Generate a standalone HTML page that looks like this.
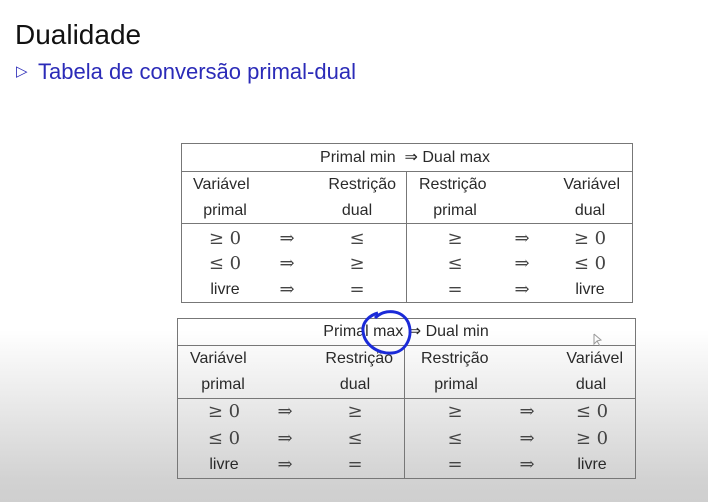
<!DOCTYPE html>
<html><head><meta charset="utf-8"><style>
html,body{margin:0;padding:0}
body{width:708px;height:502px;position:relative;overflow:hidden;font-family:"Liberation Sans",sans-serif;color:#2a2a2a;
background:linear-gradient(to bottom,#fff 0px,#fff 330px,#e4e4e4 420px,#d2d2d2 480px,#cfcfcf 502px);}
.t{position:absolute;font-size:16px;line-height:20px;white-space:nowrap}
.c{transform:translateX(-50%)}
.r{transform:translateX(-100%)}
.m{font-family:"DejaVu Serif","Liberation Serif",serif;font-size:18px;color:#444}
.box{position:absolute;border:1.5px solid #777;box-sizing:border-box}
.hl{position:absolute;height:0;border-top:1.3px solid #777}
.vl{position:absolute;width:0;border-left:1.3px solid #777}
</style></head><body>
<div class="t" style="left:15px;top:19px;font-size:28px;line-height:32px;color:#111">Dualidade</div>
<div class="t" style="left:16px;top:62px;font-size:15px;line-height:20px;color:#2b2bb8">&#9655;</div>
<div class="t" style="left:38px;top:59px;font-size:22px;line-height:26px;color:#2b2bb8">Tabela de conversão primal-dual</div>

<!-- table 1 -->
<div class="box" style="left:181px;top:143px;width:452px;height:160px"></div>
<div class="hl" style="left:181px;top:171px;width:452px"></div>
<div class="hl" style="left:181px;top:223px;width:452px"></div>
<div class="vl" style="left:406px;top:171px;height:132px"></div>
<div class="t c" style="left:405px;top:148px">Primal min &nbsp;⇒ Dual max</div>
<div class="t" style="left:193px;top:175px">Variável</div>
<div class="t c" style="left:225px;top:201px">primal</div>
<div class="t r" style="left:396px;top:175px">Restrição</div>
<div class="t c" style="left:357px;top:201px">dual</div>
<div class="t" style="left:419px;top:175px">Restrição</div>
<div class="t c" style="left:455px;top:201px">primal</div>
<div class="t r" style="left:620px;top:175px">Variável</div>
<div class="t c" style="left:590px;top:201px">dual</div>
<div class="t c m" style="left:225px;top:229px">≥ 0</div><div class="t c m" style="left:287px;top:229px">⇒</div><div class="t c m" style="left:357px;top:229px">≤</div>
<div class="t c m" style="left:455px;top:229px">≥</div><div class="t c m" style="left:522px;top:229px">⇒</div><div class="t c m" style="left:590px;top:229px">≥ 0</div>
<div class="t c m" style="left:225px;top:254px">≤ 0</div><div class="t c m" style="left:287px;top:254px">⇒</div><div class="t c m" style="left:357px;top:254px">≥</div>
<div class="t c m" style="left:455px;top:254px">≤</div><div class="t c m" style="left:522px;top:254px">⇒</div><div class="t c m" style="left:590px;top:254px">≤ 0</div>
<div class="t c" style="left:225px;top:280px">livre</div><div class="t c m" style="left:287px;top:280px">⇒</div><div class="t c m" style="left:357px;top:280px">=</div>
<div class="t c m" style="left:455px;top:280px">=</div><div class="t c m" style="left:522px;top:280px">⇒</div><div class="t c" style="left:590px;top:280px">livre</div>

<!-- table 2 -->
<div class="box" style="left:177px;top:318px;width:459px;height:161px"></div>
<div class="hl" style="left:177px;top:345px;width:459px"></div>
<div class="hl" style="left:177px;top:398px;width:459px"></div>
<div class="vl" style="left:404px;top:345px;height:134px"></div>
<div class="t c" style="left:406px;top:322px">Primal max ⇒ Dual min</div>
<div class="t" style="left:190px;top:349px">Variável</div>
<div class="t c" style="left:223px;top:375px">primal</div>
<div class="t r" style="left:393px;top:349px">Restrição</div>
<div class="t c" style="left:355px;top:375px">dual</div>
<div class="t" style="left:421px;top:349px">Restrição</div>
<div class="t c" style="left:456px;top:375px">primal</div>
<div class="t r" style="left:623px;top:349px">Variável</div>
<div class="t c" style="left:591px;top:375px">dual</div>
<div class="t c m" style="left:224px;top:402px">≥ 0</div><div class="t c m" style="left:285px;top:402px">⇒</div><div class="t c m" style="left:355px;top:402px">≥</div>
<div class="t c m" style="left:455px;top:402px">≥</div><div class="t c m" style="left:527px;top:402px">⇒</div><div class="t c m" style="left:592px;top:402px">≤ 0</div>
<div class="t c m" style="left:224px;top:429px">≤ 0</div><div class="t c m" style="left:285px;top:429px">⇒</div><div class="t c m" style="left:355px;top:429px">≤</div>
<div class="t c m" style="left:455px;top:429px">≤</div><div class="t c m" style="left:527px;top:429px">⇒</div><div class="t c m" style="left:592px;top:429px">≥ 0</div>
<div class="t c" style="left:224px;top:455px">livre</div><div class="t c m" style="left:285px;top:455px">⇒</div><div class="t c m" style="left:355px;top:455px">=</div>
<div class="t c m" style="left:455px;top:455px">=</div><div class="t c m" style="left:527px;top:455px">⇒</div><div class="t c" style="left:592px;top:455px">livre</div>

<svg style="position:absolute;left:0;top:0" width="708" height="502">
<path d="M375,318 C385,308 402,310 408,322 C414,336 406,352 392,353 C377,354 364,344 363,331 C362,322 370,315 378,313" fill="none" stroke="#1a2ad8" stroke-width="3"/>
<path d="M594,334 L594,344 L597,341 L600,346 M594,334 L601,340 L597,341" fill="none" stroke="#999" stroke-width="1"/>
</svg>
</body></html>
